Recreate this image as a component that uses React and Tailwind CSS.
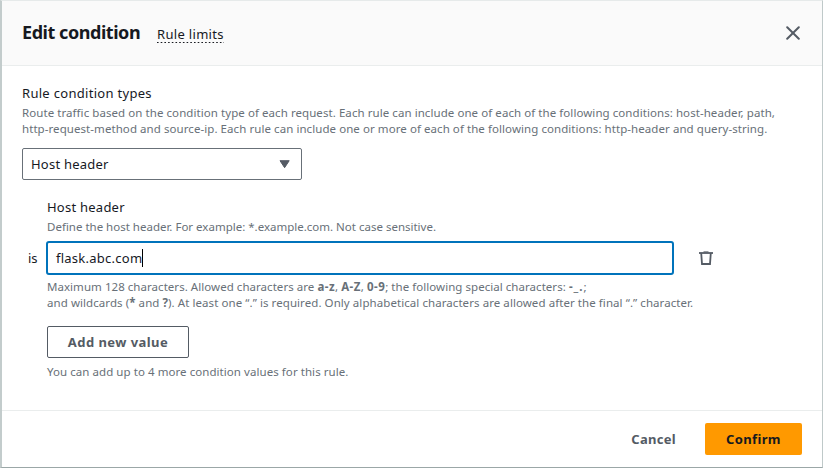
import React from "react";

const Hint = ({ children, className = "" }) => (
  <p className={`whitespace-nowrap text-[11.5px] leading-4 text-[#687078] ${className}`}>{children}</p>
);

const Chars = ({ children }) => <b className="tracking-[0.45px]">{children}</b>;

export default function App() {
  return (
    <div className="flex h-[468px] w-[823px] flex-col overflow-hidden border-b border-l-2 border-r border-t border-b-[#9ba7a7] border-l-[#c3cccc] border-r-[#bfc9c9] border-t-[#e6eaea] bg-white font-['Noto_Sans',sans-serif] text-sm text-[#16191f]">
      <header className="flex h-[65px] shrink-0 items-center border-b border-[#eaeded] bg-[#fafafa] pl-5 pr-[22px]">
        <h1 className="mb-[2px] w-[135px] whitespace-nowrap text-[18px] font-bold leading-6 tracking-[-0.45px]">Edit condition</h1>
        <a className="mt-[3px] flex flex-col whitespace-nowrap text-[13px] leading-[17px] tracking-[0.32px]">
          <span>Rule limits</span>
          <svg className="-mt-px h-px w-[67px]" aria-hidden="true">
            <line x1="0" x2="67" y1="0.5" y2="0.5" stroke="#16191f" strokeDasharray="1.6 2.1" />
          </svg>
        </a>
        <button className="ml-auto" aria-label="Close">
          <svg width="14" height="14" viewBox="0 0 14 14" fill="none" stroke="#545b64" strokeWidth="2" strokeLinecap="round">
            <path d="M1.2 1.2l11.6 11.6M12.8 1.2L1.2 12.8" />
          </svg>
        </button>
      </header>

      <main className="flex flex-1 flex-col items-start pl-5 pt-4">
        <h2 className="whitespace-nowrap text-[13px] leading-[22px] tracking-[0.3px]">Rule condition types</h2>
        <Hint className="mt-px tracking-[0.067px]">Route traffic based on the condition type of each request. Each rule can include one of each of the following conditions: host-header, path,</Hint>
        <Hint className="tracking-[0.067px]">http-request-method and source-ip. Each rule can include one or more of each of the following conditions: http-header and query-string.</Hint>
        <button className="mt-[11px] flex h-8 w-[280px] items-center justify-between rounded-[2px] border border-[#687078] pl-2 pr-[11px] text-[13px] tracking-[0.22px]">
          <span>Host header</span>
          <svg width="11" height="9" viewBox="0 0 11 9" fill="#545b64" stroke="#545b64" strokeLinejoin="round">
            <path d="M1 0.7h9.2L5.6 7.7z" />
          </svg>
        </button>

        <div className="ml-[25px] mt-4 flex flex-col items-start">
          <h3 className="whitespace-nowrap text-[13px] leading-[22px] tracking-[0.24px]">Host header</h3>
          <Hint className="mt-px">Define the host header. For example: *.example.com. Not case sensitive.</Hint>
          <div className="-ml-[19px] mt-[6px] flex h-[34px] items-center">
            <span className="w-[18px] text-[13px]">is</span>
            <div className="flex h-[34px] w-[628px] items-center rounded-[3px] border-2 border-[#0073bb] pl-2">
              <span className="whitespace-nowrap text-[13px] tracking-[0.25px]">flask.abc.com</span>
              <span className="h-[18px] w-px bg-black" />
            </div>
            <svg className="ml-[25px]" width="14" height="14" viewBox="0 0 14 14" fill="none" stroke="#545b64" strokeWidth="1.8">
              <path d="M0 2h14" />
              <path d="M4.5 0.9h5" strokeWidth="1" />
              <path d="M2.2 2l0.8 11h8L11.8 2" />
            </svg>
          </div>
          <Hint className="mt-1 tracking-[0.045px]">Maximum 128 characters. Allowed characters are <Chars>a-z</Chars>, <Chars>A-Z</Chars>, <Chars>0-9</Chars>; the following special characters: <b className="tracking-[1px]">-_.</b>;</Hint>
          <Hint className="tracking-[0.07px]">and wildcards (<b>*</b> and <b>?</b>). At least one “.” is required. Only alphabetical characters are allowed after the final “.” character.</Hint>
          <button className="mt-[15px] h-8 w-[142px] whitespace-nowrap rounded-[2px] border border-[#545b64] text-[13px] font-bold tracking-[0.45px] text-[#545b64]">Add new value</button>
          <Hint className="mt-[6px] tracking-[0.06px]">You can add up to 4 more condition values for this rule.</Hint>
        </div>
      </main>

      <footer className="flex h-[57px] shrink-0 items-center justify-end border-t border-[#eaeded] pr-5">
        <button className="mr-[29px] whitespace-nowrap text-[13px] font-bold tracking-[0.3px] text-[#545b64]">Cancel</button>
        <button className="h-8 w-[97px] whitespace-nowrap rounded-[2px] bg-[#ff9900] text-[13px] font-bold tracking-[0.35px]">Confirm</button>
      </footer>
    </div>
  );
}
